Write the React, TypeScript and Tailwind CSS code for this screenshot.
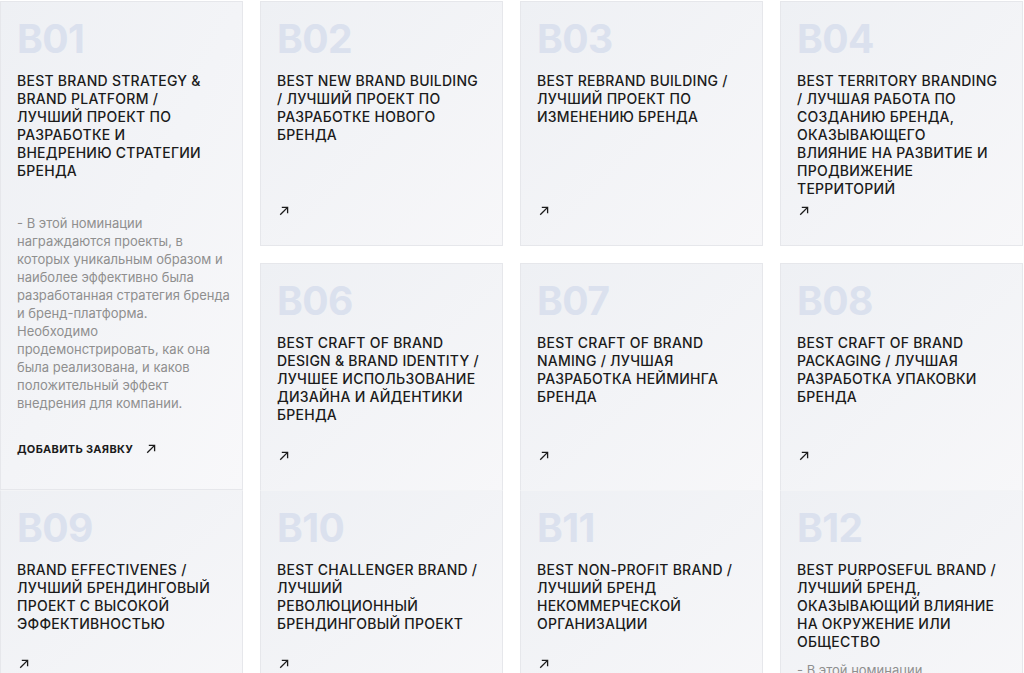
import * as React from 'react';

type Card = {
  code: string;
  title: string[];
  description?: string[];
  col: string;
  row: string;
  extra?: string;
};

const DESC_B01 = [
  '- В этой номинации',
  'награждаются проекты, в',
  'которых уникальным образом и',
  'наиболее эффективно была',
  'разработанная стратегия бренда',
  'и бренд-платформа.',
  'Необходимо',
  'продемонстрировать, как она',
  'была реализована, и каков',
  'положительный эффект',
  'внедрения для компании.'
];

const cards: Card[] = [
  {
    code: 'B02',
    title: ['BEST NEW BRAND BUILDING', '/ ЛУЧШИЙ ПРОЕКТ ПО', 'РАЗРАБОТКЕ НОВОГО', 'БРЕНДА'],
    col: 'col-start-2',
    row: 'row-start-1'
  },
  {
    code: 'B03',
    title: ['BEST REBRAND BUILDING /', 'ЛУЧШИЙ ПРОЕКТ ПО', 'ИЗМЕНЕНИЮ БРЕНДА'],
    col: 'col-start-3',
    row: 'row-start-1'
  },
  {
    code: 'B04',
    title: [
      'BEST TERRITORY BRANDING',
      '/ ЛУЧШАЯ РАБОТА ПО',
      'СОЗДАНИЮ БРЕНДА,',
      'ОКАЗЫВАЮЩЕГО',
      'ВЛИЯНИЕ НА РАЗВИТИЕ И',
      'ПРОДВИЖЕНИЕ',
      'ТЕРРИТОРИЙ'
    ],
    col: 'col-start-4',
    row: 'row-start-1'
  },
  {
    code: 'B06',
    title: ['BEST CRAFT OF BRAND', 'DESIGN & BRAND IDENTITY /', 'ЛУЧШЕЕ ИСПОЛЬЗОВАНИЕ', 'ДИЗАЙНА И АЙДЕНТИКИ', 'БРЕНДА'],
    col: 'col-start-2',
    row: 'row-start-3',
    extra: 'border-b-0'
  },
  {
    code: 'B07',
    title: ['BEST CRAFT OF BRAND', 'NAMING / ЛУЧШАЯ', 'РАЗРАБОТКА НЕЙМИНГА', 'БРЕНДА'],
    col: 'col-start-3',
    row: 'row-start-3',
    extra: 'border-b-0'
  },
  {
    code: 'B08',
    title: ['BEST CRAFT OF BRAND', 'PACKAGING / ЛУЧШАЯ', 'РАЗРАБОТКА УПАКОВКИ', 'БРЕНДА'],
    col: 'col-start-4',
    row: 'row-start-3',
    extra: 'border-b-0'
  },
  {
    code: 'B09',
    title: ['BRAND EFFECTIVENES /', 'ЛУЧШИЙ БРЕНДИНГОВЫЙ', 'ПРОЕКТ С ВЫСОКОЙ', 'ЭФФЕКТИВНОСТЬЮ'],
    col: 'col-start-1',
    row: 'row-start-4',
    extra: 'border-t-[#f3f4f6]'
  },
  {
    code: 'B10',
    title: ['BEST CHALLENGER BRAND /', 'ЛУЧШИЙ', 'РЕВОЛЮЦИОННЫЙ', 'БРЕНДИНГОВЫЙ ПРОЕКТ'],
    col: 'col-start-2',
    row: 'row-start-4',
    extra: 'border-t-[#f3f4f6]'
  },
  {
    code: 'B11',
    title: ['BEST NON-PROFIT BRAND /', 'ЛУЧШИЙ БРЕНД', 'НЕКОММЕРЧЕСКОЙ', 'ОРГАНИЗАЦИИ'],
    col: 'col-start-3',
    row: 'row-start-4',
    extra: 'border-t-[#f3f4f6]'
  },
  {
    code: 'B12',
    title: ['BEST PURPOSEFUL BRAND /', 'ЛУЧШИЙ БРЕНД,', 'ОКАЗЫВАЮЩИЙ ВЛИЯНИЕ', 'НА ОКРУЖЕНИЕ ИЛИ', 'ОБЩЕСТВО'],
    description: ['- В этой номинации', 'награждаются проекты, в'],
    col: 'col-start-4',
    row: 'row-start-4',
    extra: 'border-t-[#f3f4f6]'
  }
];

function ArrowIcon() {
  return (
    <svg width="10" height="10" viewBox="0 0 10 10" fill="none" stroke="#1b1b1b" strokeWidth="1.3">
      <path d="M1.2 8.8 8.6 1.4" />
      <path d="M2.8 1.4h5.8v5.8" />
    </svg>
  );
}

function Title({ lines }: { lines: string[] }) {
  return (
    <div className="mt-[14px] shrink-0 text-[14px] leading-[18px] font-medium text-[#1b1b1b] tracking-[0.25px]">
      {lines.map((l) => (
        <div key={l} className="whitespace-nowrap">
          {l}
        </div>
      ))}
    </div>
  );
}

function Code({ code }: { code: string }) {
  return <div className="shrink-0 text-[39px] leading-[38px] font-bold text-[#dbe1ee] tracking-[-0.5px]">{code}</div>;
}

function NominationCard({ card }: { card: Card }) {
  return (
    <div
      className={`${card.col} ${card.row} flex flex-col border border-[#e6e7eb] bg-gradient-to-br from-[#eef0f4] to-[#f7f7f9] px-[16px] pt-[18px] pb-[29px] overflow-hidden ${card.extra ?? ''}`}
    >
      <Code code={card.code} />
      <Title lines={card.title} />
      {card.description ? (
        <div className="mt-[10px] text-[13px] leading-[18px] text-[#8f8f8f]">
          {card.description.map((l) => (
            <div key={l} className="whitespace-nowrap">
              {l}
            </div>
          ))}
        </div>
      ) : null}
      <div className="mt-auto shrink-0 pl-[2px]">
        <ArrowIcon />
      </div>
    </div>
  );
}

export default function App() {
  return (
    <div
      className="h-[673px] w-[1024px] overflow-hidden bg-white pt-px"
      style={{ fontFamily: 'Inter, "Noto Sans", sans-serif' }}
    >
      <div className="grid w-[1023px] grid-cols-4 grid-rows-[245px_17px_227px_209px] gap-x-[17px]">
        <div className="col-start-1 row-start-1 row-span-3 flex flex-col border border-[#e6e7eb] bg-gradient-to-br from-[#eef0f4] to-[#f8f8fa] px-[16px] pt-[18px] pb-[33px]">
          <Code code="B01" />
          <Title
            lines={[
              'BEST BRAND STRATEGY &',
              'BRAND PLATFORM /',
              'ЛУЧШИЙ ПРОЕКТ ПО',
              'РАЗРАБОТКЕ И',
              'ВНЕДРЕНИЮ СТРАТЕГИИ',
              'БРЕНДА'
            ]}
          />
          <div className="mt-[34px] text-[13px] leading-[18px] text-[#8f8f8f]">
            {DESC_B01.map((l) => (
              <div key={l} className="whitespace-nowrap">
                {l}
              </div>
            ))}
          </div>
          <div className="mt-auto flex items-center gap-[13px]">
            <span className="text-[11px] leading-[14px] font-bold tracking-[0.3px] text-[#1b1b1b]">ДОБАВИТЬ ЗАЯВКУ</span>
            <ArrowIcon />
          </div>
        </div>
        {cards.map((c) => (
          <NominationCard key={c.code} card={c} />
        ))}
      </div>
    </div>
  );
}
